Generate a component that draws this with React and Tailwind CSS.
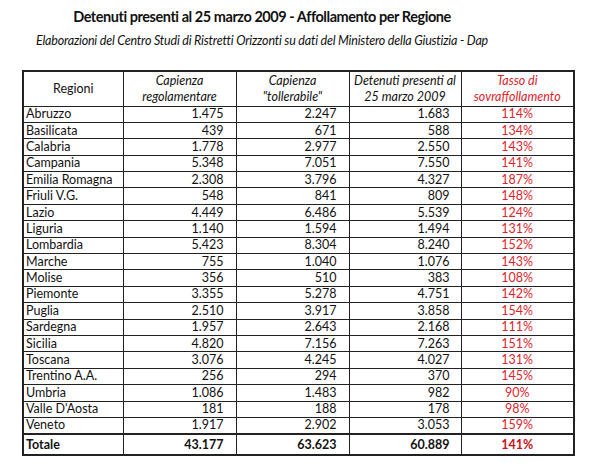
import React from "react";

const rows = [
  ["Abruzzo", "1.475", "2.247", "1.683", "114%"],
  ["Basilicata", "439", "671", "588", "134%"],
  ["Calabria", "1.778", "2.977", "2.550", "143%"],
  ["Campania", "5.348", "7.051", "7.550", "141%"],
  ["Emilia Romagna", "2.308", "3.796", "4.327", "187%"],
  ["Friuli V.G.", "548", "841", "809", "148%"],
  ["Lazio", "4.449", "6.486", "5.539", "124%"],
  ["Liguria", "1.140", "1.594", "1.494", "131%"],
  ["Lombardia", "5.423", "8.304", "8.240", "152%"],
  ["Marche", "755", "1.040", "1.076", "143%"],
  ["Molise", "356", "510", "383", "108%"],
  ["Piemonte", "3.355", "5.278", "4.751", "142%"],
  ["Puglia", "2.510", "3.917", "3.858", "154%"],
  ["Sardegna", "1.957", "2.643", "2.168", "111%"],
  ["Sicilia", "4.820", "7.156", "7.263", "151%"],
  ["Toscana", "3.076", "4.245", "4.027", "131%"],
  ["Trentino A.A.", "256", "294", "370", "145%"],
  ["Umbria", "1.086", "1.483", "982", "90%"],
  ["Valle D'Aosta", "181", "188", "178", "98%"],
  ["Veneto", "1.917", "2.902", "3.053", "159%"],
];

const cell = "border border-[#222] p-0";

export default function App() {
  return (
    <div className="w-[600px] h-[468px] bg-white text-[#111] font-['Lato','Open_Sans',sans-serif]">
      <div className="w-[524px] pt-[7px] text-center">
        <h1 className="text-[14.5px] font-bold leading-[20px] tracking-[-0.45px]">
          Detenuti presenti al 25 marzo 2009 - Affollamento per Regione
        </h1>
        <p className="mt-[4px] text-[12.5px] italic leading-[20px] tracking-[-0.2px]">
          Elaborazioni del Centro Studi di Ristretti Orizzonti su dati del Ministero della Giustizia - Dap
        </p>
      </div>

      <table className="ml-[22px] mt-[19px] w-[551px] table-fixed border-collapse border-2 border-[#222] text-[12.5px] leading-[14px]">
        <colgroup>
          <col className="w-[100px]" />
          <col className="w-[113px]" />
          <col className="w-[113px]" />
          <col className="w-[112px]" />
          <col className="w-[113px]" />
        </colgroup>
        <thead>
          <tr className="h-[35px] text-center leading-[16px]">
            <th className={`${cell} font-normal`}>Regioni</th>
            <th className={`${cell} font-normal italic`}>
              Capienza
              <br />
              regolamentare
            </th>
            <th className={`${cell} font-normal italic`}>
              Capienza
              <br />
              "tollerabile"
            </th>
            <th className={`${cell} font-normal italic`}>
              Detenuti presenti al
              <br />
              25 marzo 2009
            </th>
            <th className={`${cell} font-normal italic text-[#e0242a]`}>
              Tasso di
              <br />
              sovraffollamento
            </th>
          </tr>
        </thead>
        <tbody>
          {rows.map((r) => (
            <tr key={r[0]} className="h-[16.4px]">
              <td className={`${cell} pl-[2px]`}>{r[0]}</td>
              <td className={`${cell} pr-[12px] text-right`}>{r[1]}</td>
              <td className={`${cell} pr-[12px] text-right`}>{r[2]}</td>
              <td className={`${cell} pr-[11px] text-right`}>{r[3]}</td>
              <td className={`${cell} text-center text-[#e0242a]`}>{r[4]}</td>
            </tr>
          ))}
          <tr className="h-[21px] font-bold">
            <td className={`${cell} border-t-2 pl-[2px] pt-[2px]`}>Totale</td>
            <td className={`${cell} border-t-2 pr-[12px] pt-[2px] text-right`}>43.177</td>
            <td className={`${cell} border-t-2 pr-[12px] pt-[2px] text-right`}>63.623</td>
            <td className={`${cell} border-t-2 pr-[11px] pt-[2px] text-right`}>60.889</td>
            <td className={`${cell} border-t-2 pt-[2px] text-center text-[#cc1016]`}>141%</td>
          </tr>
        </tbody>
      </table>
    </div>
  );
}
